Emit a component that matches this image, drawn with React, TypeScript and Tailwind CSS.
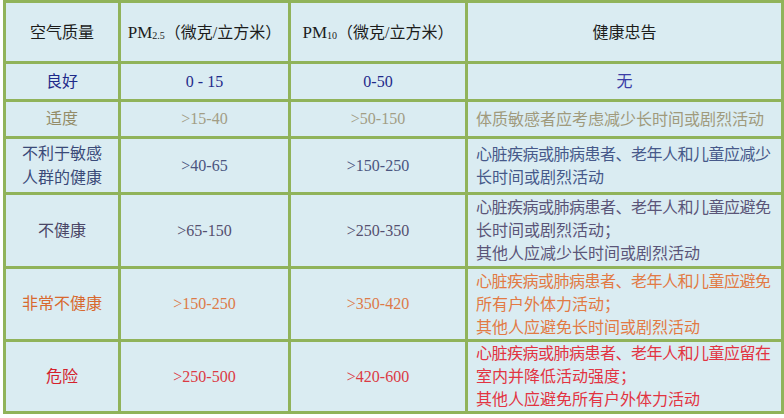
const sans = "font-['Liberation_Serif','Noto_Sans_CJK_SC',serif]";

type Row = {
  label: string[];
  pm25: string;
  pm10: string;
  advice: string[];
  center?: boolean;
  h: string;
  labelColor: string;
  numColor: string;
  adviceColor: string;
};

const rows: Row[] = [
  {
    label: ["良好"],
    pm25: "0 - 15",
    pm10: "0-50",
    advice: ["无"],
    center: true,
    h: "h-[35px]",
    labelColor: "text-[#1f2a8a]",
    numColor: "text-[#1f2a8a]",
    adviceColor: "text-[#3b3ca6]",
  },
  {
    label: ["适度"],
    pm25: ">15-40",
    pm10: ">50-150",
    advice: ["体质敏感者应考虑减少长时间或剧烈活动"],
    h: "h-[34px]",
    labelColor: "text-[#948c68]",
    numColor: "text-[#a29d85]",
    adviceColor: "text-[#a09a7c]",
  },
  {
    label: ["不利于敏感", "人群的健康"],
    pm25: ">40-65",
    pm10: ">150-250",
    advice: ["心脏疾病或肺病患者、老年人和儿童应减少", "长时间或剧烈活动"],
    h: "h-[53px]",
    labelColor: "text-[#3a4a78]",
    numColor: "text-[#4a5580]",
    adviceColor: "text-[#46598a]",
  },
  {
    label: ["不健康"],
    pm25: ">65-150",
    pm10: ">250-350",
    advice: [
      "心脏疾病或肺病患者、老年人和儿童应避免",
      "长时间或剧烈活动；",
      "其他人应减少长时间或剧烈活动",
    ],
    h: "h-[71px]",
    labelColor: "text-[#4a4666]",
    numColor: "text-[#55506f]",
    adviceColor: "text-[#5a5578]",
  },
  {
    label: ["非常不健康"],
    pm25: ">150-250",
    pm10: ">350-420",
    advice: [
      "心脏疾病或肺病患者、老年人和儿童应避免",
      "所有户外体力活动；",
      "其他人应避免长时间或剧烈活动",
    ],
    h: "h-[70px]",
    labelColor: "text-[#d8692f]",
    numColor: "text-[#dd7a48]",
    adviceColor: "text-[#e27a44]",
  },
  {
    label: ["危险"],
    pm25: ">250-500",
    pm10: ">420-600",
    advice: [
      "心脏疾病或肺病患者、老年人和儿童应留在",
      "室内并降低活动强度；",
      "其他人应避免所有户外体力活动",
    ],
    h: "h-[69px]",
    labelColor: "text-[#d4222c]",
    numColor: "text-[#dc3a44]",
    adviceColor: "text-[#e23442]",
  },
];

const cell = "bg-[#daecf2] flex items-center";

export default function App() {
  return (
    <div className={`w-[784px] h-[418px] bg-white ${sans} text-[16px]`}>
      {/* Table */}
      <div className="ml-[3px] w-[781px] grid grid-cols-[112px_167px_174px_313px] gap-[3px] p-[3px] bg-[#90b35a]">
        {/* Header */}
        <div className={`${cell} h-[58px] justify-center pt-[2px] text-[#1c1c1c]`}>空气质量</div>
        <div className={`${cell} h-[58px] justify-center pt-[2px] text-[#1c1c1c]`}>
          <span className="text-[17px]">PM</span>
          <sub className="text-[10px] relative top-[3px]">2.5</sub>（微克/立方米）
        </div>
        <div className={`${cell} h-[58px] justify-center pt-[2px] text-[#1c1c1c]`}>
          <span className="text-[17px]">PM</span>
          <sub className="text-[10px] relative top-[3px]">10</sub>（微克/立方米）
        </div>
        <div className={`${cell} h-[58px] justify-center pt-[2px] text-[#1c1c1c]`}>健康忠告</div>

        {rows.map((r) => (
          <div key={r.label.join("")} className="contents">
            <div className={`${cell} ${r.h} ${r.labelColor} justify-center text-center leading-[24px]`}>
              <div>
                {r.label.map((l) => (
                  <div key={l}>{l}</div>
                ))}
              </div>
            </div>
            <div className={`${cell} ${r.h} ${r.numColor} justify-center`}>{r.pm25}</div>
            <div className={`${cell} ${r.h} ${r.numColor} justify-center`}>{r.pm10}</div>
            <div
              className={`${cell} ${r.h} ${r.adviceColor} ${
                r.center ? "justify-center" : "pl-[8px]"
              } leading-[23px] whitespace-nowrap`}
            >
              <div>
                {r.advice.map((a) => (
                  <div key={a} className={a.includes("、") ? "tracking-[-0.5px]" : ""}>
                    {a}
                  </div>
                ))}
              </div>
            </div>
          </div>
        ))}
      </div>
    </div>
  );
}
